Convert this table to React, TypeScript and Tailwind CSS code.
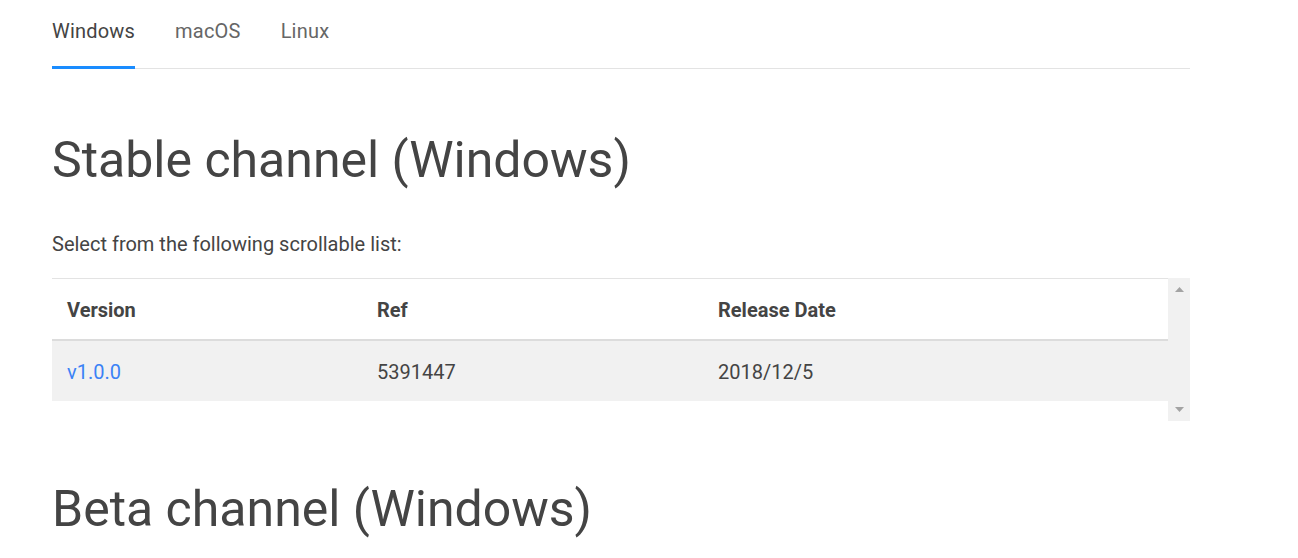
const tabs = ["Windows", "macOS", "Linux"];

const rows = [{ version: "v1.0.0", ref: "5391447", date: "2018/12/5" }];

function ScrollArrow({ down }: { down?: boolean }) {
  return (
    <svg width="9" height="5" viewBox="0 0 9 5" className={down ? "rotate-180" : ""}>
      <path d="M0 5 L4.5 0 L9 5 Z" fill="#a3a3a3" />
    </svg>
  );
}

export default function App() {
  const active = "Windows";

  return (
    <div className="h-[558px] w-[1298px] overflow-hidden bg-white pl-[52px] font-['Roboto',sans-serif] text-[#444]">
      <div className="w-[1138px]">
        <nav className="flex h-[69px] gap-10 border-b border-[#e3e3e3]">
          {tabs.map((tab) => (
            <div
              key={tab}
              className={
                tab === active
                  ? "-mb-px flex items-start border-b-[3px] border-[#1a8cff] pt-[20px] text-[20px] leading-[22px] tracking-[0.2px] text-[#444]"
                  : "flex items-start pt-[20px] text-[20px] leading-[22px] tracking-[0.2px] text-[#666]"
              }
            >
              {tab}
            </div>
          ))}
        </nav>

        <h1 className="mt-[61px] text-[50px] leading-[60px] font-normal">
          Stable channel (Windows)
        </h1>

        <p className="mt-[42px] text-[20px] leading-[24px]">
          Select from the following scrollable list:
        </p>

        <div className="mt-[22px] flex h-[143px]">
          <div className="w-[1116px] border-t border-[#e3e3e3]">
            <div className="flex h-[62px] items-start border-b-2 border-[#dcdcdc] pt-[19px] text-[20px] leading-[24px] font-bold">
              <div className="w-[310px] pl-[15px]">Version</div>
              <div className="w-[341px] pl-[15px]">Ref</div>
              <div className="pl-[15px]">Release Date</div>
            </div>
            {rows.map((row) => (
              <div
                key={row.version}
                className="flex h-[60px] items-start bg-[#f1f1f1] pt-[19px] text-[20px] leading-[24px]"
              >
                <div className="w-[310px] pl-[15px] text-[#3b82f6]">{row.version}</div>
                <div className="w-[341px] pl-[15px]">{row.ref}</div>
                <div className="pl-[15px]">{row.date}</div>
              </div>
            ))}
          </div>
          <div className="flex w-[22px] flex-col items-center justify-between bg-[#f1f1f1] pt-[9px] pb-[9px]">
            <ScrollArrow />
            <ScrollArrow down />
          </div>
        </div>

        <h2 className="mt-[58px] text-[50px] leading-[60px] font-normal">
          Beta channel (Windows)
        </h2>
      </div>
    </div>
  );
}
